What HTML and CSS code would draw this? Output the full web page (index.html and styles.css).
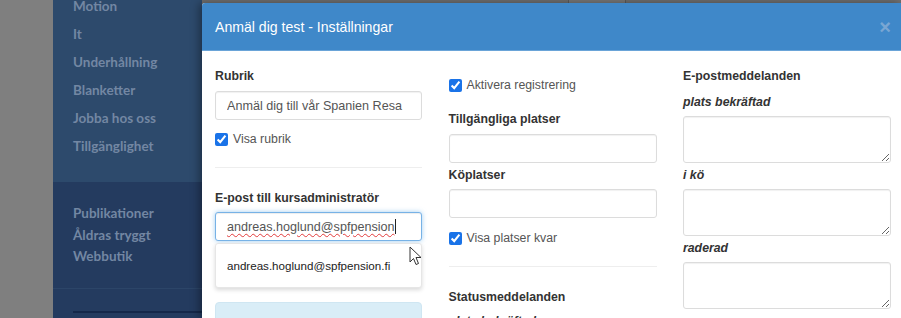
FILE: index.html
```html
<!DOCTYPE html>
<html lang="sv">

<head>
    <meta charset="UTF-8">
    <meta name="viewport" content="width=device-width, initial-scale=1.0">
    <title>Anmäl dig test - Inställningar</title>
    <link rel="stylesheet" href="styles.css">
</head>

<body>
    <div class="page">
        <div class="backdrop-side"></div>

        <nav class="sidebar">
            <ul class="menu">
                <li>Motion</li>
                <li>It</li>
                <li>Underhållning</li>
                <li>Blanketter</li>
                <li>Jobba hos oss</li>
                <li>Tillgänglighet</li>
            </ul>
            <div class="sidebar-lower">
                <ul class="links">
                    <li>Publikationer</li>
                    <li>Åldras tryggt</li>
                    <li>Webbutik</li>
                </ul>
                <div class="divider"></div>
                <div class="rule"></div>
            </div>
        </nav>

        <main class="content">
            <div class="toolbar">
                <span class="btn-send">Skicka</span>
            </div>

            <div class="modal">
                <div class="modal-header">
                    <h4 class="modal-title">Anmäl dig test - Inställningar</h4>
                    <span class="close">&times;</span>
                </div>

                <div class="modal-body">
                    <div class="col">
                        <label class="label">Rubrik</label>
                        <input class="form-control" type="text" value="Anmäl dig till vår Spanien Resa">
                        <label class="check check-first"><input type="checkbox" checked> Visa rubrik</label>
                        <hr>
                        <label class="label label-tight">E-post till kursadministratör</label>
                        <div class="form-control focused">
                            <span class="typed">andreas.hoglund@spfpension</span><span class="caret"></span>
                        </div>
                        <div class="suggest">andreas.hoglund@spfpension.fi</div>
                        <div class="alert-info"></div>
                    </div>

                    <div class="col">
                        <label class="check check-top"><input type="checkbox" checked> Aktivera registrering</label>
                        <label class="label label-after-check">Tillgängliga platser</label>
                        <input class="form-control" type="text">
                        <label class="label label-next label-tight">Köplatser</label>
                        <input class="form-control" type="text">
                        <label class="check check-after-input"><input type="checkbox" checked> Visa platser kvar</label>
                        <hr>
                        <label class="label">Statusmeddelanden</label>
                        <label class="sublabel sublabel-status">plats bekräftad</label>
                    </div>

                    <div class="col">
                        <label class="label">E-postmeddelanden</label>
                        <label class="sublabel sublabel-first">plats bekräftad</label>
                        <textarea class="form-control area"></textarea>
                        <label class="sublabel">i kö</label>
                        <textarea class="form-control area"></textarea>
                        <label class="sublabel">raderad</label>
                        <textarea class="form-control area"></textarea>
                    </div>
                </div>
            </div>
        </main>
    </div>

    <svg class="cursor" width="13" height="20" viewBox="0 0 13 20">
        <path d="M1 1 L1 16 L4.5 12.5 L7 18.5 L9.5 17.5 L7 11.5 L12 11.5 Z" fill="#fff" stroke="#333" stroke-width="1" stroke-linejoin="round"/>
    </svg>
</body>

</html>
```

FILE: styles.css
```css
* {
    box-sizing: border-box;
    margin: 0;
    padding: 0;
}

body {
    width: 901px;
    height: 318px;
    overflow: hidden;
    font-family: 'Liberation Sans', Arial, sans-serif;
    background-color: #7f7f7f;
    position: relative;
}

.page {
    display: flex;
    height: 318px;
}

/* dimmed page behind the dialog */

.backdrop-side {
    width: 53px;
    background-color: #7f7f7f;
}

.sidebar {
    width: 149px;
    display: flex;
    flex-direction: column;
    background-color: #2d4a6c;
    font-family: 'Lato', 'Open Sans', sans-serif;
    font-weight: 700;
    font-size: 13.5px;
    color: #7387a3;
}

.menu {
    list-style: none;
    height: 182px;
    padding-left: 20px;
    margin-top: -8px;
    line-height: 28px;
    margin-bottom: 8px;
    flex-shrink: 0;
}

.sidebar-lower {
    flex: 1;
    background-color: #243b5f;
    padding-top: 21px;
}

.links {
    list-style: none;
    padding-left: 20px;
    line-height: 21.5px;
}

.divider {
    height: 1px;
    margin-top: 20px;
    background-color: #2c4568;
}

.rule {
    height: 2px;
    margin: 22px 0 0 20px;
    background-color: #15284a;
}

.content {
    flex: 1;
    display: flex;
    flex-direction: column;
    background-color: #6e6e6e;
    min-width: 0;
}

.toolbar {
    height: 3px;
    flex-shrink: 0;
    overflow: hidden;
    padding-left: 366px;
}

.btn-send {
    display: inline-block;
    width: 58px;
    height: 20px;
    margin-top: -14px;
    border: 1px solid #5a5a5a;
    font-size: 12px;
    line-height: 18px;
    text-align: center;
    color: #222;
    background-color: #777;
    vertical-align: top;
}

/* dialog */

.modal {
    flex: 1;
    display: flex;
    flex-direction: column;
    background: white;
    box-shadow: -3px 0 8px rgba(0, 0, 0, 0.35);
    border-top-left-radius: 3px;
    overflow: hidden;
}

.modal-header {
    height: 48px;
    flex-shrink: 0;
    display: flex;
    align-items: center;
    justify-content: space-between;
    padding: 0 10px 0 13px;
    background-color: #3f88c9;
    border-bottom: 1px solid #6aa4d8;
}

.modal-title {
    font-size: 14.1px;
    font-weight: 400;
    color: white;
    padding-top: 1px;
}

.close {
    font-size: 20px;
    font-weight: 700;
    color: #79a6d3;
    line-height: 1;
}

.modal-body {
    display: grid;
    grid-template-columns: 207px 208px 208px;
    column-gap: 26.5px;
    padding: 16px 13px 0;
    align-items: start;
    flex-shrink: 0;
}

.label {
    display: block;
    font-size: 12.3px;
    font-weight: 700;
    line-height: 18px;
    color: #333;
    margin-bottom: 6px;
}

.label-tight {
    margin-bottom: 5px;
}

.label-after-check {
    margin-top: 16px;
}

.label-next {
    margin-top: 3px;
}

.sublabel {
    display: block;
    font-size: 12.3px;
    font-weight: 700;
    font-style: italic;
    line-height: 18px;
    color: #333;
    margin: 3px 0 5px;
}

.sublabel-first {
    margin-top: 8px;
}

.sublabel-status {
    margin-top: 6px;
}

.form-control {
    display: block;
    width: 100%;
    height: 29px;
    padding: 0 11px;
    border: 1px solid #dcdcdc;
    border-radius: 3px;
    font-family: inherit;
    font-size: 12.6px;
    color: #555;
    background: white;
    box-shadow: inset 0 1px 1px rgba(0, 0, 0, 0.06);
}

.form-control:focus {
    outline: none;
}

.form-control.focused {
    display: flex;
    align-items: center;
    border-color: #77b2e6;
    box-shadow: inset 0 1px 1px rgba(0, 0, 0, 0.075), 0 0 5px rgba(102, 175, 233, 0.6);
}

.typed {
    text-decoration: underline wavy #e23b3b;
    text-decoration-thickness: 1px;
    text-underline-offset: 2px;
}

.caret {
    width: 1px;
    height: 15px;
    background-color: #222;
}

.area {
    height: 47px;
    resize: vertical;
}

.check {
    display: flex;
    align-items: center;
    gap: 5px;
    height: 18px;
    font-size: 12.3px;
    color: #555;
}

.check input {
    width: 13px;
    height: 13px;
    margin: 0;
    accent-color: #1a73e8;
}

.check-first {
    margin-top: 10px;
}

.check-top {
    margin-top: 9px;
}

.check-after-input {
    margin-top: 11px;
}

hr {
    border: none;
    border-top: 1px solid #eee;
    margin: 19px 0 21px;
}

.suggest {
    margin-top: 2px;
    height: 45px;
    padding: 0 11px;
    display: flex;
    align-items: center;
    font-size: 11.6px;
    color: #222;
    background: white;
    border: 1px solid #e6e6e6;
    border-radius: 3px;
    box-shadow: 0 2px 4px rgba(0, 0, 0, 0.15);
}

.alert-info {
    margin-top: 14px;
    height: 30px;
    background-color: #d9edf7;
    border: 1px solid #cfe6f2;
    border-radius: 4px;
}

.cursor {
    position: absolute;
    left: 409px;
    top: 246px;
}
```
